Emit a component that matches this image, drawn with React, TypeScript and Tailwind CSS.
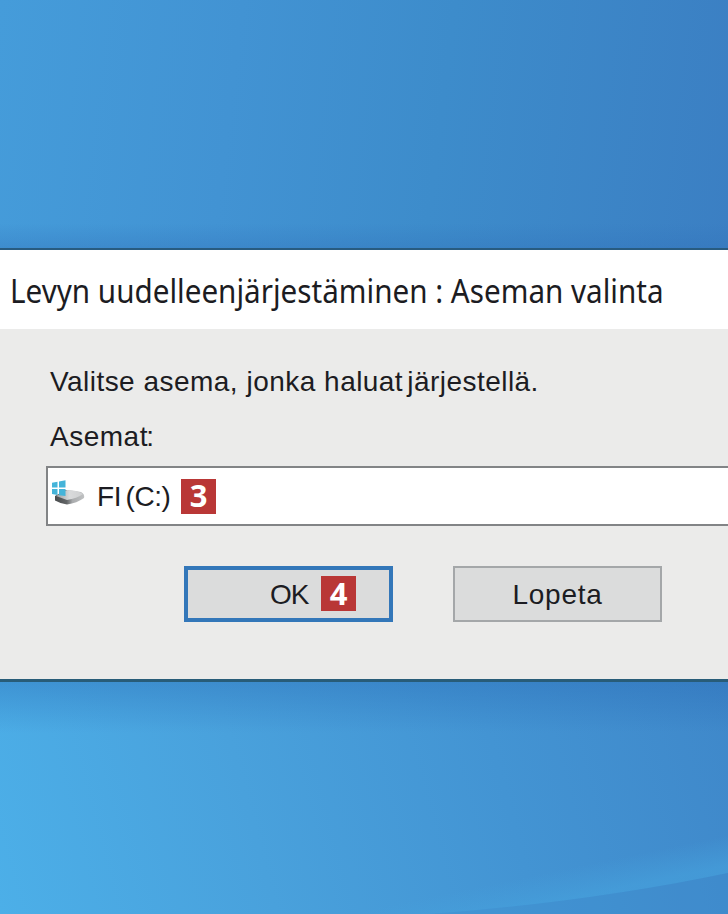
import React from 'react';

// ─── Types ────────────────────────────────────────────────
interface StepBadgeProps {
  step: number;
}

function StepBadge({ step }: StepBadgeProps) {
  return (
    <span className="flex h-[35px] w-[35px] shrink-0 items-center justify-center bg-[#b93736] pb-px font-['Open_Sans','Noto_Sans',sans-serif] text-[31px] leading-none font-bold tracking-normal text-white">
      {step}
    </span>
  );
}

function DriveIcon() {
  return (
    <svg width="34" height="28" viewBox="0 0 34 28" className="mb-[5px] shrink-0">
      <defs>
        <linearGradient id="drive-top" x1="0" y1="0" x2="1" y2="0">
          <stop offset="0" stopColor="#9b9d9f" />
          <stop offset="0.5" stopColor="#d9dadb" />
          <stop offset="1" stopColor="#cfd0d1" />
        </linearGradient>
        <linearGradient id="drive-side" x1="0" y1="0" x2="1" y2="0">
          <stop offset="0" stopColor="#484b4d" />
          <stop offset="0.4" stopColor="#626567" />
          <stop offset="0.6" stopColor="#a9abad" />
          <stop offset="1" stopColor="#bfc1c2" />
        </linearGradient>
      </defs>
      <path d="M3 16 L14 10 L29 12 Q33 14 32 18 Q25 23 15 24.5 Q8 23.5 3 20.5 Z" fill="url(#drive-side)" />
      <path d="M4 16 L15 10 Q25 10 31 14 Q25 18.5 15 20 Z" fill="url(#drive-top)" />
      <path d="M0 2.8 L5.5 1.8 V7.5 H0 Z M7 1.5 L13.5 0.3 V7.5 H7 Z M0 9 H5.5 V15 L0 14 Z M7 9 H13.5 V16 L7 15.2 Z" fill="#45b4d9" />
    </svg>
  );
}

export default function App() {
  return (
    <div className="flex h-[914px] w-[728px] flex-col overflow-hidden font-['Liberation_Sans',sans-serif] text-[28px] leading-none whitespace-nowrap text-[#1c1c22]">
      {/* ─── Desktop above the window ─── */}
      <div className="h-[248px] shrink-0 bg-[linear-gradient(to_bottom,transparent_90%,#3070b855),linear-gradient(97deg,#459cda_0%,#4293d3_32%,#3d8ccb_60%,#3b7fc3_100%)]" />

      {/* ─── Window ─── */}
      <div className="flex h-[434px] shrink-0 flex-col border-t-2 border-b-3 border-t-[#285b80] border-b-[#285c78] bg-[#ebebea]">
        <div className="flex h-[79px] shrink-0 items-center bg-white pl-[10px]">
          <h1 className="origin-left scale-x-[0.926] pt-[2px] font-['Noto_Sans',sans-serif] text-[32px]">
            Levyn uudelleenjärjestäminen : Aseman valinta
          </h1>
        </div>

        <div className="flex flex-col pl-[46px]">
          <p className="mt-[39px] pl-1 tracking-[0.45px] [word-spacing:0.2px]">
            Valitse asema, jonka haluat<span className="[word-spacing:-4px]"> </span>järjestellä.
          </p>
          <p className="mt-[27px] pl-1 tracking-[0.5px]">
            Asema<span className="tracking-[-1.2px]">t:</span>
          </p>
          <div className="mt-[15px] flex h-[60px] items-center border-2 border-r-0 border-[#828486] bg-white pl-1">
            <DriveIcon />
            <span className="ml-[11px] w-[84px] pt-[2px] tracking-[-0.4px] [word-spacing:-3px]">FI (C:)</span>
            <StepBadge step={3} />
          </div>
          <div className="mt-[40px] flex gap-[60px] pl-[138px]">
            <button className="flex h-[56px] w-[209px] items-center border-4 border-[#3377b9] bg-[#dbdcdc] pb-px pl-[82px]">
              <span className="w-[51px] pt-[3px] text-left tracking-[-1px]">OK</span>
              <StepBadge step={4} />
            </button>
            <button className="h-[56px] w-[209px] border-2 border-[#a4a7a9] bg-[#dbdcdc] pt-[2px] tracking-[0.7px]">Lopeta</button>
          </div>
        </div>
      </div>

      {/* ─── Desktop below the window ─── */}
      <div className="grow bg-[linear-gradient(to_bottom,#2464b055,transparent_22%),linear-gradient(75deg,#4cafe8_0%,#49a1dc_35%,#4394d3_68%,#3f88ca_100%)]">
        <svg width="728" height="232" viewBox="0 0 728 232">
          <defs>
            <linearGradient id="beam" gradientUnits="userSpaceOnUse" x1="560" y1="188" x2="566" y2="217">
              <stop offset="0" stopColor="#46a2dd" stopOpacity="0" />
              <stop offset="1" stopColor="#46a2dd" stopOpacity="0.6" />
            </linearGradient>
          </defs>
          <path d="M230 232 L728 150 V191 Q590 220 430 232 Z" fill="url(#beam)" />
          <path d="M430 232 Q590 220 728 191 V232 Z" fill="#3a8acc" fillOpacity="0.2" />
        </svg>
      </div>
    </div>
  );
}
